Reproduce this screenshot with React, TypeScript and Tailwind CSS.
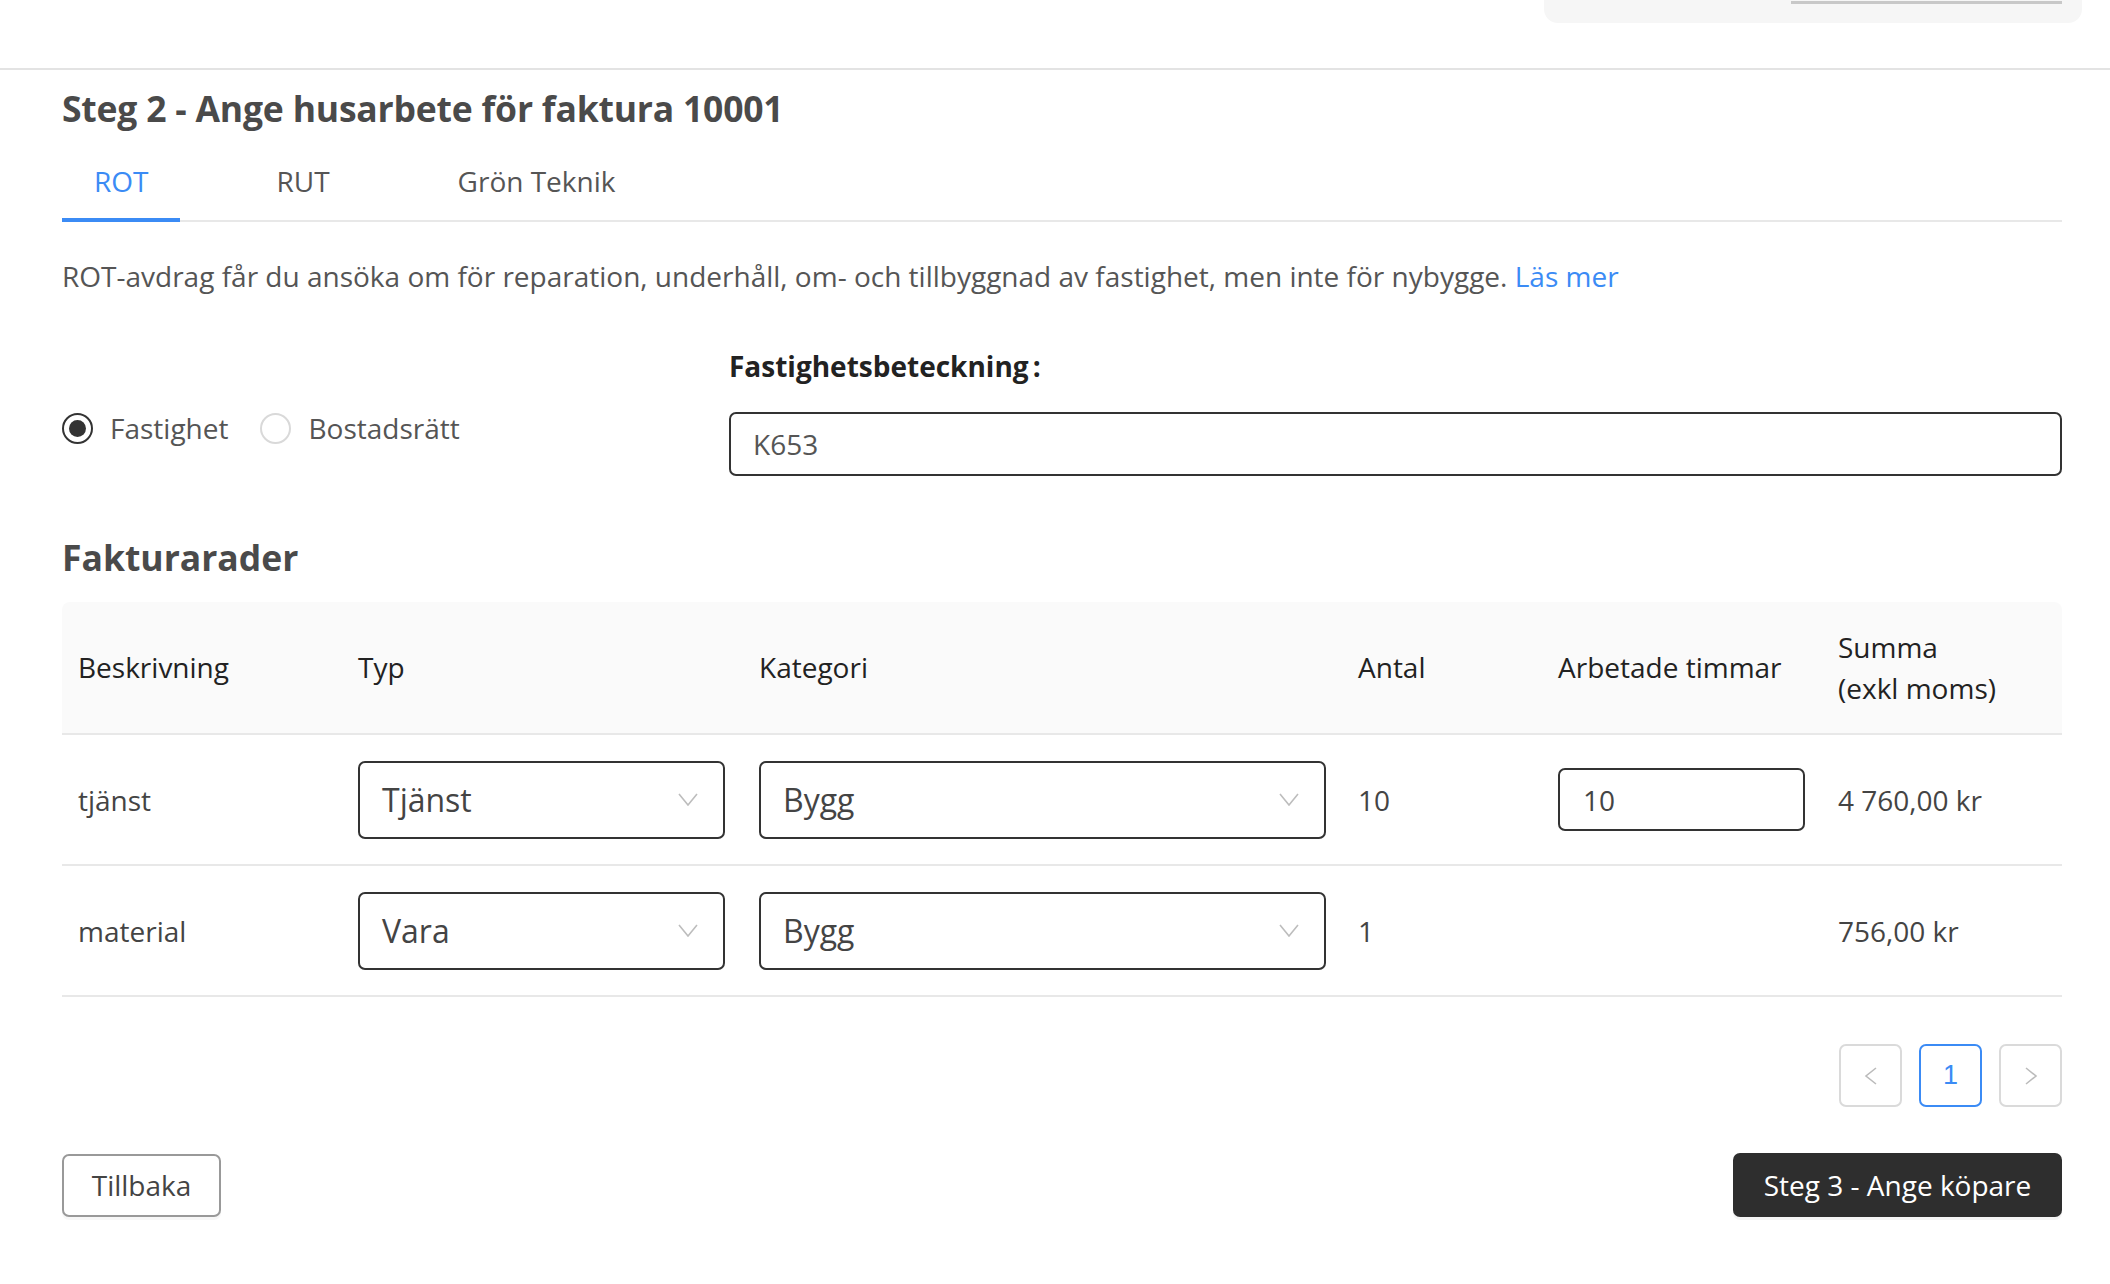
import { useState } from 'react';

const FONT = { fontFamily: '"Open Sans", "Noto Sans", sans-serif' };

const ROWS = [
  { id: 'r1', desc: 'tjänst', typ: 'Tjänst', kategori: 'Bygg', antal: '10', timmar: '10', summa: '4 760,00 kr' },
  { id: 'r2', desc: 'material', typ: 'Vara', kategori: 'Bygg', antal: '1', timmar: null, summa: '756,00 kr' },
];

function Chevron() {
  return (
    <svg width="20" height="13" viewBox="0 0 20 13" fill="none" className="shrink-0">
      <polyline points="1,1 10,12 19,1" stroke="#bdbdbd" strokeWidth="1.6" />
    </svg>
  );
}

function Select({ value, className }: { value: string; className: string }) {
  return (
    <div
      className={`h-[78px] border-2 border-[#333] rounded-[7px] flex items-center justify-between pl-[22px] pr-[25px] text-[32px] text-[#444] ${className}`}
    >
      <span>{value}</span>
      <Chevron />
    </div>
  );
}

function Radio({ checked, label }: { checked: boolean; label: string }) {
  return (
    <label className="flex items-center gap-[17px] cursor-pointer">
      <span
        className={`w-[31px] h-[31px] rounded-full flex items-center justify-center ${
          checked ? 'border-[2.5px] border-[#333]' : 'border-2 border-[#d9d9d9]'
        }`}
      >
        {checked && <span className="w-[17px] h-[17px] rounded-full bg-[#333]" />}
      </span>
      <span className="text-[28px] leading-[40px] text-[#555]">{label}</span>
    </label>
  );
}

function PageBtn({ children, active }: { children: React.ReactNode; active?: boolean }) {
  return (
    <button
      className={`w-[63px] h-[63px] rounded-[7px] border-2 flex items-center justify-center bg-white ${
        active ? 'border-[#3b8bf5] text-[#3b8bf5]' : 'border-[#dadada] text-[#bbb]'
      }`}
    >
      {children}
    </button>
  );
}

export default function App() {
  const [tab, setTab] = useState('ROT');
  const [fastighet, setFastighet] = useState(true);

  return (
    <div className="min-h-screen bg-white text-[#444]" style={FONT}>
      {/* top header strip */}
      <div className="h-[70px] border-b-2 border-[#e3e3e3] flex items-start justify-end pr-[28px]">
        <div className="w-[538px] h-[23px] bg-[#f6f6f6] rounded-b-[14px] flex justify-end pr-[20px] pt-px">
          <div className="w-[271px] h-[3px] bg-[#c8c8c8]" />
        </div>
      </div>

      <div className="pl-[62px] pr-[48px]">
        <h1 className="mt-[14px] text-[35.5px] leading-[48px] font-bold text-[#4a4a4a] tracking-[-0.2px]">
          Steg 2 - Ange husarbete för faktura 10001
        </h1>

        <div className="flex gap-[64px] border-b-2 border-[#e8e8e8]">
          {['ROT', 'RUT', 'Grön Teknik'].map((t) => (
            <button
              key={t}
              onClick={() => setTab(t)}
              className={`px-[32px] pt-[29px] pb-[17px] -mb-[2px] border-b-4 text-[28px] leading-[40px] ${
                tab === t ? 'border-[#3b8bf5] text-[#3b8bf5]' : 'border-transparent text-[#555]'
              }`}
            >
              {t}
            </button>
          ))}
        </div>

        <p className="mt-[34px] text-[28px] leading-[40px] text-[#555]">
          ROT-avdrag får du ansöka om för reparation, underhåll, om- och tillbyggnad av fastighet, men inte för nybygge.{' '}
          <a className="text-[#3b8bf5]">Läs mer</a>
        </p>

        <div className="mt-[50px] grid grid-cols-[667px_1fr]">
          <div className="pt-[62px] flex items-start gap-[32px]">
            <div onClick={() => setFastighet(true)}>
              <Radio checked={fastighet} label="Fastighet" />
            </div>
            <div onClick={() => setFastighet(false)}>
              <Radio checked={!fastighet} label="Bostadsrätt" />
            </div>
          </div>
          <div>
            <div className="text-[28px] leading-[40px] font-bold text-[#222]">
              Fastighetsbeteckning<span className="ml-[4px]">:</span>
            </div>
            <div className="mt-[26px] h-[64px] border-2 border-[#333] rounded-[7px] flex items-center px-[22px] text-[28px] text-[#555]">
              K653
            </div>
          </div>
        </div>

        <h2 className="mt-[57px] text-[35.5px] leading-[48px] font-bold text-[#4a4a4a]">Fakturarader</h2>

        <table className="mt-[21px] w-full table-fixed border-collapse text-[28px]">
          <colgroup>
            <col className="w-[280px]" />
            <col className="w-[401px]" />
            <col className="w-[599px]" />
            <col className="w-[200px]" />
            <col className="w-[280px]" />
            <col />
          </colgroup>
          <thead>
            <tr className="bg-[#fafafa] border-b-2 border-[#e8e8e8] h-[132px]">
              {['Beskrivning', 'Typ', 'Kategori', 'Antal', 'Arbetade timmar'].map((h, i) => (
                <th
                  key={h}
                  className={`px-[16px] text-left font-normal leading-[41px] text-[#222] ${i === 0 ? 'rounded-tl-[8px]' : ''}`}
                >
                  {h}
                </th>
              ))}
              <th className="px-[16px] text-left font-normal leading-[41px] text-[#222] rounded-tr-[8px]">
                Summa
                <br />
                (exkl moms)
              </th>
            </tr>
          </thead>
          <tbody>
            {ROWS.map((r) => (
              <tr key={r.id} className="border-b-2 border-[#e8e8e8] h-[131px] text-[#444]">
                <td className="px-[16px]">{r.desc}</td>
                <td className="pl-[16px]">
                  <Select value={r.typ} className="w-[367px]" />
                </td>
                <td className="pl-[16px]">
                  <Select value={r.kategori} className="w-[567px]" />
                </td>
                <td className="px-[16px]">{r.antal}</td>
                <td className="px-[16px]">
                  {r.timmar && (
                    <div className="w-[247px] h-[63px] border-2 border-[#333] rounded-[7px] flex items-center px-[23px]">
                      {r.timmar}
                    </div>
                  )}
                </td>
                <td className="px-[16px]">{r.summa}</td>
              </tr>
            ))}
          </tbody>
        </table>

        <div className="mt-[47px] flex justify-end gap-[17px]">
          <PageBtn>
            <svg width="14" height="18" viewBox="0 0 14 18" fill="none">
              <polyline points="12,1 2,9 12,17" stroke="#bbb" strokeWidth="1.6" />
            </svg>
          </PageBtn>
          <PageBtn active>
            <span className="text-[27px]" style={{ fontFamily: '"Liberation Sans", Arial, sans-serif' }}>
              1
            </span>
          </PageBtn>
          <PageBtn>
            <svg width="14" height="18" viewBox="0 0 14 18" fill="none">
              <polyline points="2,1 12,9 2,17" stroke="#bbb" strokeWidth="1.6" />
            </svg>
          </PageBtn>
        </div>

        <div className="mt-[46px] flex justify-between items-center">
          <button className="w-[159px] h-[63px] border-2 border-[#999] rounded-[7px] text-[28px] text-[#444] bg-white shadow-[0_3px_0_rgba(0,0,0,0.03)]">
            Tillbaka
          </button>
          <button className="w-[329px] h-[64px] rounded-[7px] bg-[#2e2e2e] text-white text-[28px] shadow-[0_3px_0_rgba(0,0,0,0.04)]">
            Steg 3 - Ange köpare
          </button>
        </div>
      </div>
    </div>
  );
}
